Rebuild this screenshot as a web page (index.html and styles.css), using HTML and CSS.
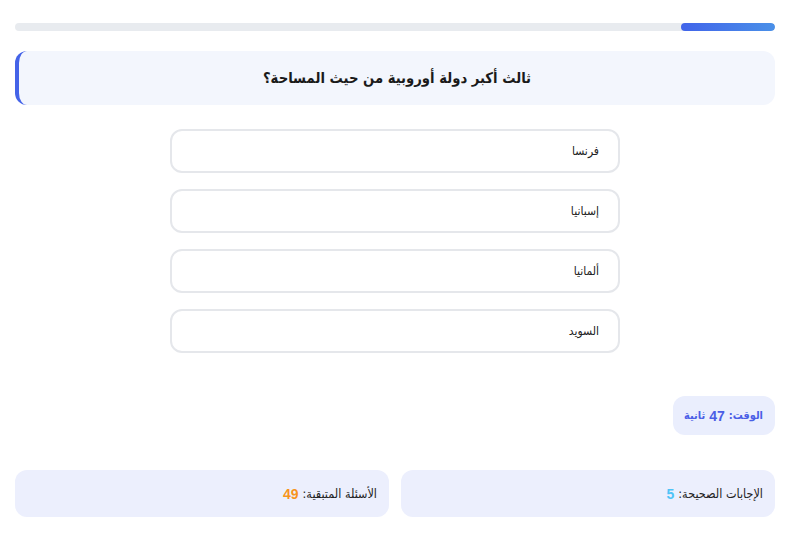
FILE: index.html
```html
<!DOCTYPE html>
<html lang="ar" dir="rtl">
<head>
<meta charset="utf-8">
<link rel="stylesheet" href="styles.css">
</head>
<body>
<div class="quiz">
  <div class="progress"><div class="progress-fill" style="width:12.4%"></div></div>
  <div class="question">ثالث أكبر دولة أوروبية من حيث المساحة؟</div>
  <div class="options">
    <div class="option">فرنسا</div>
    <div class="option">إسبانيا</div>
    <div class="option">ألمانيا</div>
    <div class="option">السويد</div>
  </div>
  <div class="timer-row"><div class="timer">الوقت: <b class="num">47</b> ثانية</div></div>
  <div class="stats">
    <div class="stat">الإجابات الصحيحة: <b class="num correct">5</b></div>
    <div class="stat">الأسئلة المتبقية: <b class="num remaining">49</b></div>
  </div>
</div>
</body>
</html>
```
FILE: styles.css
```css
html, body { margin: 0; padding: 0; background: #fff; }
body { font-family: "DejaVu Sans Condensed", "DejaVu Sans", sans-serif; font-stretch: condensed; color: #222; }
.quiz { padding: 23px 13px 0 15px; display: flex; flex-direction: column; }
.progress { height: 8px; background: #e8ebef; border-radius: 4px; overflow: hidden; display: flex; }
.progress-fill { background: linear-gradient(to left, #4a90e8, #4164ea); border-radius: 4px; height: 100%; }
.question { margin-top: 20px; height: 54px; box-sizing: border-box; background: #f3f6fd; border-radius: 12px; border-left: 4px solid #4463e8; display: flex; align-items: center; justify-content: center; font-weight: bold; font-size: 14.7px; color: #1a1a1a; padding-bottom: 1px; }
.options { margin: 24px auto 0; width: 450px; display: flex; flex-direction: column; gap: 16px; }
.option { height: 44px; box-sizing: border-box; border: 2px solid #e5e7eb; border-radius: 12px; display: flex; align-items: center; padding: 0 19px; font-size: 12px; color: #222; background: #fff; }
.timer-row { margin-top: 43px; display: flex; }
.timer { height: 39px; box-sizing: border-box; padding: 0 12px 0 11px; background: #eaeefd; border-radius: 12px; display: flex; align-items: center; font-size: 11px; font-weight: bold; color: #4a5ee6; }
.num { font-family: "Liberation Sans", Arial, sans-serif; font-stretch: normal; font-weight: bold; font-size: 14px; }
.timer .num { margin: 0 4px; }
.stats { margin-top: 35px; display: flex; gap: 12px; }
.stat { flex: 1; height: 47px; box-sizing: border-box; background: #eceffd; border-radius: 12px; display: flex; align-items: center; padding: 0 12px; font-size: 12.5px; color: #222; }
.stat .num { margin-right: 4px; }
.correct { color: #4fc3f7; }
.remaining { color: #f7941d; }
```
